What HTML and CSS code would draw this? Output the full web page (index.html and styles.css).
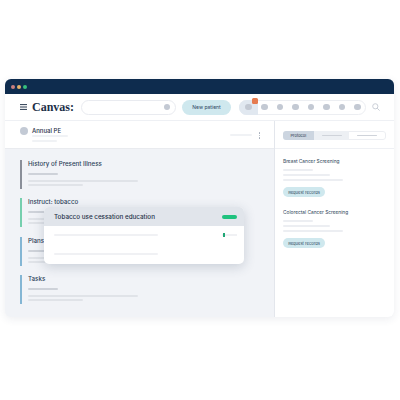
FILE: index.html
```html
<!DOCTYPE html>
<html lang="en">
<head>
<meta charset="utf-8">
<title>Canvas</title>
<link rel="stylesheet" href="styles.css">
</head>
<body>
<div class="window">
  <div class="titlebar">
    <span class="dot dot-red"></span><span class="dot dot-yellow"></span><span class="dot dot-green"></span>
  </div>
  <div class="nav">
    <svg class="menu" width="7" height="6" viewBox="0 0 7 6"><path d="M0 .6h7M0 3h7M0 5.4h7" stroke="#2a3b50" stroke-width="1"/></svg>
    <span class="logo">Canvas:</span>
    <div class="search"><span class="knob"></span></div>
    <div class="new-btn">New patient</div>
    <div class="tray">
      <div class="tray-first"><span class="knob"></span><span class="badge"></span></div>
      <span class="knob"></span><span class="knob"></span><span class="knob"></span><span class="knob"></span><span class="knob"></span><span class="knob"></span><span class="knob"></span>
    </div>
    <svg class="lens" width="8" height="8" viewBox="0 0 8 8"><circle cx="3.3" cy="3.3" r="2.6" fill="none" stroke="#c4cad3" stroke-width=".9"/><path d="M5.2 5.2L7.6 7.6" stroke="#c4cad3" stroke-width=".9"/></svg>
  </div>
  <div class="main">
    <div class="left">
      <div class="subhead">
        <span class="avatar"></span>
        <div class="patient">
          <div class="patient-name">Annual PE</div>
          <div class="line line-patient"></div>
          <div class="line line-patient2"></div>
        </div>
        <div class="line line-meta"></div>
        <div class="kebab"><i></i><i></i><i></i></div>
      </div>
      <div class="notes">
        <section class="note note-grey">
          <h3>History of Present Illness</h3>
          <div class="line line-s"></div><div class="line line-l"></div><div class="line line-m"></div>
        </section>
        <section class="note note-green">
          <h3>Instruct: tobacco</h3>
          <div class="line line-s"></div><div class="line line-l"></div><div class="line line-m"></div>
        </section>
        <section class="note note-blue">
          <h3>Plans</h3>
          <div class="line line-s"></div><div class="line line-l"></div><div class="line line-m"></div>
        </section>
        <section class="note note-blue">
          <h3>Tasks</h3>
          <div class="line line-s"></div><div class="line line-l"></div><div class="line line-m"></div>
        </section>
      </div>
    </div>
    <div class="right">
      <div class="tabs-row">
        <div class="tabs">
          <div class="tab tab-active">Protocol</div>
          <div class="tab tab-mid"><span class="line line-tab"></span></div>
          <div class="tab tab-last"><span class="line line-tab"></span></div>
        </div>
      </div>
      <div class="protocols">
        <section class="protocol">
          <h4>Breast Cancer Screening</h4>
          <div class="line line-p1"></div><div class="line line-p2"></div><div class="line line-p3"></div>
          <div class="req">Request records</div>
        </section>
        <section class="protocol">
          <h4>Colorectal Cancer Screening</h4>
          <div class="line line-p1"></div><div class="line line-p2"></div><div class="line line-p3"></div>
          <div class="req">Request records</div>
        </section>
      </div>
    </div>
  </div>
  <div class="popover">
    <div class="pop-head"><span>Tobacco use cessation education</span><span class="pill"></span></div>
    <div class="pop-body">
      <div class="pop-row"><div class="line line-pop"></div><div class="meter"><i></i></div></div>
      <div class="pop-row"><div class="line line-pop"></div></div>
    </div>
  </div>
</div>
</body>
</html>
```
FILE: styles.css
```css
* { box-sizing: border-box; }
html, body { margin: 0; height: 100%; background: #fff; }
body { padding: 79px 6px 0 5px; font-family: "Inter", "Liberation Sans", sans-serif; color: #1f3147; }
h3, h4 { margin: 0; font-weight: 500; }

.window {
  position: relative;
  width: 389px;
  height: 238px;
  border-radius: 6px;
  background: #f1f3f7;
  box-shadow: 0 2px 8px rgba(40, 60, 90, .09);
  overflow: hidden;
  display: flex;
  flex-direction: column;
}
.titlebar { height: 15px; flex: none; background: #0e2c4e; display: flex; align-items: center; gap: 2px; padding-left: 6px; }
.dot { width: 4px; height: 4px; border-radius: 50%; }
.dot-red { background: #c9807f; }
.dot-yellow { background: #e3b26b; }
.dot-green { background: #35c07d; }

.nav { height: 27px; flex: none; background: #fff; border-bottom: 1px solid #eef0f4; display: flex; align-items: center; padding-left: 15px; }
.menu { flex: none; }
.logo { font-family: "Liberation Serif", serif; font-weight: 700; font-size: 12px; margin-left: 5px; width: 45px; color: #1c2f47; }
.search { width: 95px; height: 15px; margin-left: 4px; border: 1px solid #e9ebf0; border-radius: 8px; display: flex; align-items: center; justify-content: flex-end; padding-right: 5px; }
.knob { width: 6.5px; height: 6.5px; border-radius: 50%; background: #c3c9d3; flex: none; display: block; }
.new-btn { width: 49px; height: 15px; margin-left: 6px; border-radius: 8px; background: #cfe8ee; font-size: 5px; display: flex; align-items: center; justify-content: center; color: #2c4660; }
.tray { width: 127px; height: 15px; margin-left: 8px; border: 1px solid #eceef2; border-radius: 8px; display: flex; align-items: center; gap: 9px; }
.tray-first { position: relative; width: 19px; height: 15px; flex: none; margin: 0 -6px 0 -1px; background: #e1e8f0; border-radius: 8px 0 0 8px; display: flex; align-items: center; justify-content: center; }
.badge { position: absolute; top: -2px; right: 0; width: 6px; height: 6px; border-radius: 1.5px; background: #e57b50; }
.lens { margin-left: 6px; flex: none; }

.main { flex: 1; display: flex; min-height: 0; }
.left { width: 270px; flex: none; display: flex; flex-direction: column; border-right: 1px solid #e3e6ec; }
.subhead { height: 28px; flex: none; background: #fff; border-bottom: 1px solid #e9ebef; display: flex; align-items: flex-start; padding: 6px 14px 0 15px; }
.avatar { width: 8px; height: 8px; border-radius: 50%; background: #c3cad5; margin-right: 4px; flex: none; }
.patient { flex: 1; }
.patient-name { font-size: 6px; font-weight: 500; line-height: 7px; }
.line { background: #e3e6eb; height: 2px; border-radius: 1px; display: block; }
.line-patient { width: 36px; margin-top: 1px; background: #f0f2f5; }
.line-patient2 { width: 25px; margin-top: 3px; background: #f0f2f5; }
.line-meta { width: 22px; margin: 7px 7px 0 0; background: #f0f2f5; }
.kebab { display: flex; flex-direction: column; gap: 1px; margin-top: 5px; }
.kebab i { width: 1.5px; height: 1.5px; background: #a3acb8; border-radius: 50%; display: block; }

.notes { flex: 1; padding: 11px 0 0 15px; display: flex; flex-direction: column; gap: 9.3px; }
.note { height: 29px; flex: none; border-left: 2px solid #8a8f99; padding-left: 6px; }
.note-green { border-color: #76cfae; }
.note-blue { border-color: #84b6d4; }
.note h3 { font-size: 6.2px; line-height: 7px; color: #2b3f57; margin-bottom: 6px; }
.note .line { background: #e0e3e8; margin-bottom: 2px; }
.note .line-s { width: 30px; background: #ced2d9; margin-bottom: 5px; }
.line-l { width: 110px; }
.line-m { width: 55px; }

.right { flex: 1; background: #fff; display: flex; flex-direction: column; }
.tabs-row { height: 28px; flex: none; border-bottom: 1px solid #eef0f4; padding: 10px 0 0 8px; }
.tabs { width: 103px; height: 9px; display: flex; border-radius: 3px; overflow: hidden; }
.tab { flex: 36; display: flex; align-items: center; justify-content: center; font-size: 4px; }
.tab-active { flex: 31; background: #ccd5e0; }
.tab-mid { background: #edf0f4; }
.tab-last { background: #fff; border: 1px solid #eceef2; border-left: 0; border-radius: 0 3px 3px 0; }
.line-tab { width: 20px; background: #cfd3da; height: 1px; }
.protocols { padding: 8px 0 0 8px; display: flex; flex-direction: column; }
.protocol { height: 51px; flex: none; }
.protocol h4 { font-size: 4.8px; line-height: 8px; font-weight: 400; color: #2b3f57; margin-bottom: 4px; }
.protocol .line { margin-bottom: 3px; background: #eceef2; }
.line-p1 { width: 30px; }
.line-p2 { width: 47px; }
.line-p3 { width: 60px; }
.req { width: 42px; height: 10px; margin-top: 6px; border-radius: 5px; background: #cfe8ee; font-size: 4.1px; display: flex; align-items: center; justify-content: center; color: #2c4660; }

.popover { position: absolute; left: 39px; top: 128px; width: 200px; height: 57px; border-radius: 5px; overflow: hidden; background: #fff; box-shadow: 0 3px 12px rgba(40, 60, 90, .2); }
.pop-head { height: 19px; background: #e1e5eb; display: flex; align-items: center; justify-content: space-between; padding: 0 7px 0 10px; font-size: 6.3px; font-weight: 500; }
.pill { width: 15px; height: 4px; border-radius: 2px; background: #1fc27e; }
.pop-body { padding: 8px 7px 0 10px; display: flex; flex-direction: column; gap: 17px; }
.pop-row { display: flex; align-items: center; justify-content: space-between; height: 2px; }
.line-pop { width: 104px; height: 2px; background: #f0f1f4; }
.meter { width: 15px; height: 2px; background: #f0f1f4; position: relative; }
.meter i { position: absolute; left: 1px; top: -1px; width: 1.5px; height: 4px; background: #1fa775; }
```
